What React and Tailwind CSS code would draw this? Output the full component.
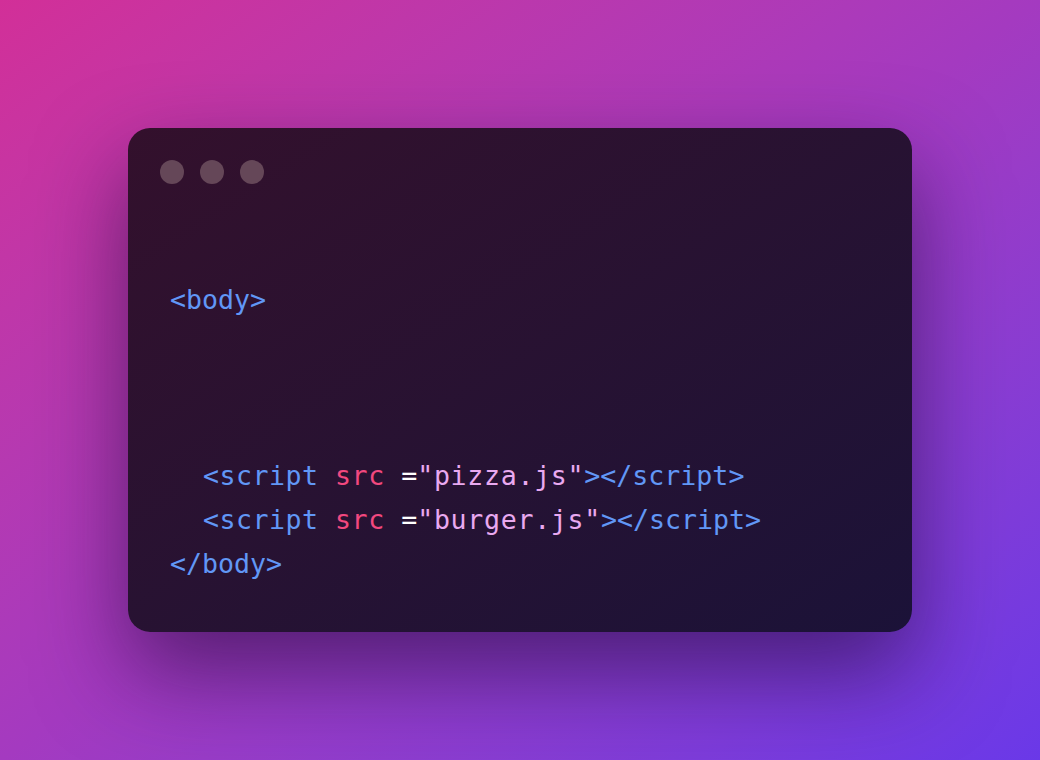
import React from "react";

const blue = "text-[#6197f6]";
const pink = "text-[#f2487f]";
const str = "text-[#e9a9f0]";

function Line({ children }) {
	return <div className="h-[44px] leading-[44px] whitespace-pre">{children}</div>;
}

function ScriptLine({ file }) {
	return (
		<Line>
			<span className={`${blue} tracking-[0.5px]`}>{"  <script "}</span>
			<span className={`${pink} tracking-[0.5px]`}>{"src "}</span>
			<span className="text-white">{"="}</span>
			<span className={`${str} tracking-[0.7px]`}>{`"${file}"`}</span>
			<span className={blue}>{"></script>"}</span>
		</Line>
	);
}

export default function App() {
	return (
		<div className="w-full h-[760px] flex items-center justify-center bg-gradient-to-br from-[#d22f98] via-[#a43ac0] to-[#6a38e8]">
			<div className="w-[784px] h-[504px] rounded-[22px] bg-gradient-to-br from-[#33102c] to-[#1b1238] shadow-[0_40px_90px_rgba(35,10,60,0.6)] px-8 pt-8">
				<div className="flex gap-4">
					<div className="w-6 h-6 rounded-full bg-[#654758]" />
					<div className="w-6 h-6 rounded-full bg-[#654758]" />
					<div className="w-6 h-6 rounded-full bg-[#654758]" />
				</div>
				<div className="mt-[94px] pl-[10px] text-[26.6px] font-['DejaVu_Sans_Mono',monospace]">
					<Line>
						<span className={blue}>{"<body>"}</span>
					</Line>
					<Line />
					<Line />
					<Line />
					<ScriptLine file="pizza.js" />
					<ScriptLine file="burger.js" />
					<Line>
						<span className={blue}>{"</body>"}</span>
					</Line>
				</div>
			</div>
		</div>
	);
}
